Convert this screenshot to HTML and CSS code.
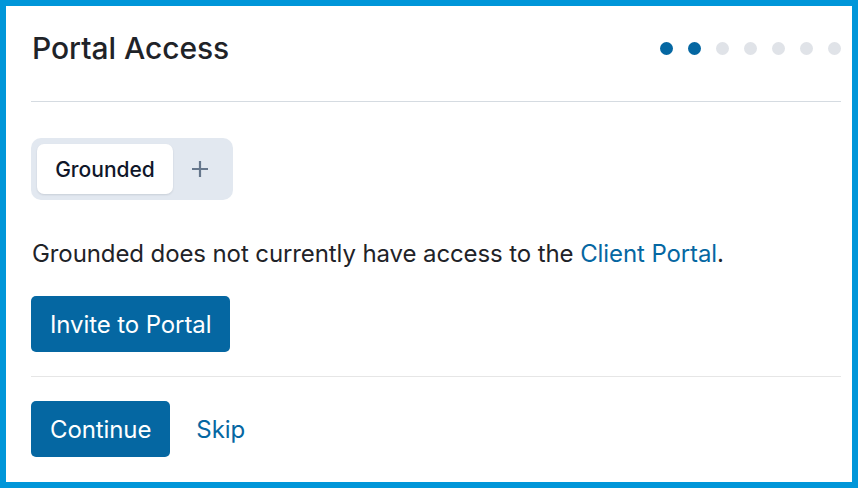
FILE: index.html
```html
<!DOCTYPE html>
<html lang="en">
<head>
<meta charset="utf-8">
<title>Portal Access</title>
<link rel="stylesheet" href="styles.css">
</head>
<body>
<div class="frame">
  <header class="header">
    <h1 class="title">Portal Access</h1>
    <div class="steps">
      <span class="dot dot-active"></span>
      <span class="dot dot-active"></span>
      <span class="dot"></span>
      <span class="dot"></span>
      <span class="dot"></span>
      <span class="dot"></span>
      <span class="dot"></span>
    </div>
  </header>
  <section class="body">
    <div class="tabs">
      <button class="tab tab-active">Grounded</button>
      <button class="tab-add" aria-label="Add">
        <svg width="18" height="18" viewBox="0 0 18 18"><path d="M9 1v16M1 9h16" stroke="#66778c" stroke-width="2.2" fill="none"/></svg>
      </button>
    </div>
    <p class="message">Grounded does not currently have access to the <a class="link" href="#">Client Portal</a>.</p>
    <button class="btn">Invite to Portal</button>
  </section>
  <footer class="footer">
    <button class="btn">Continue</button>
    <a class="link skip" href="#">Skip</a>
  </footer>
</div>
</body>
</html>
```
FILE: styles.css
```css
* { box-sizing: border-box; }
html, body { margin: 0; padding: 0; }
body {
  font-family: Inter, "Noto Sans", sans-serif;
  color: #1f2328;
  background: #ffffff;
}
.frame {
  width: 858px;
  height: 488px;
  border: 6px solid #0096d9;
  padding: 0 11px 0 25px;
  display: flex;
  flex-direction: column;
  overflow: hidden;
}
.header {
  display: flex;
  align-items: center;
  justify-content: space-between;
  padding: 24px 0 35px 1px;
  border-bottom: 1px solid #d5dbe1;
}
.title {
  margin: 0;
  font-size: 30px;
  line-height: 36px;
  font-weight: 500;
  letter-spacing: -0.05px;
}
.steps {
  display: flex;
  gap: 15px;
  padding-right: 0;
}
.dot {
  width: 13px;
  height: 13px;
  border-radius: 50%;
  background: #e0e3e8;
}
.dot-active { background: #0567a2; }
.body {
  padding: 36px 0 24px;
  border-bottom: 1px solid #e6e6e6;
}
.tabs {
  display: inline-flex;
  align-items: center;
  background: #e2e8f0;
  border-radius: 10px;
  padding: 6px;
  height: 62px;
  width: 202px;
}
.tab {
  font-family: inherit;
  border: none;
  background: #ffffff;
  border-radius: 7px;
  height: 50px;
  width: 136px;
  font-size: 21px;
  font-weight: 500;
  color: #0f172a;
  box-shadow: 0 1px 2px rgba(15, 23, 42, 0.12);
  cursor: pointer;
  padding: 0;
}
.tab-add {
  border: none;
  background: transparent;
  flex: 1;
  height: 50px;
  display: flex;
  align-items: center;
  justify-content: center;
  padding: 0;
  cursor: pointer;
}
.message {
  margin: 38px 0 26px 1px;
  font-size: 24px;
  line-height: 32px;
  letter-spacing: -0.1px;
}
.link {
  color: #0567a2;
  text-decoration: none;
}
.btn {
  font-family: inherit;
  border: none;
  background: #0567a2;
  color: #ffffff;
  font-size: 24px;
  font-weight: 400;
  letter-spacing: -0.1px;
  height: 56px;
  padding: 0 19px;
  border-radius: 5px;
  cursor: pointer;
  display: block;
}
.footer {
  display: flex;
  align-items: center;
  gap: 26px;
  padding-top: 24px;
}
.skip {
  font-size: 24px;
  letter-spacing: -0.1px;
}
```
